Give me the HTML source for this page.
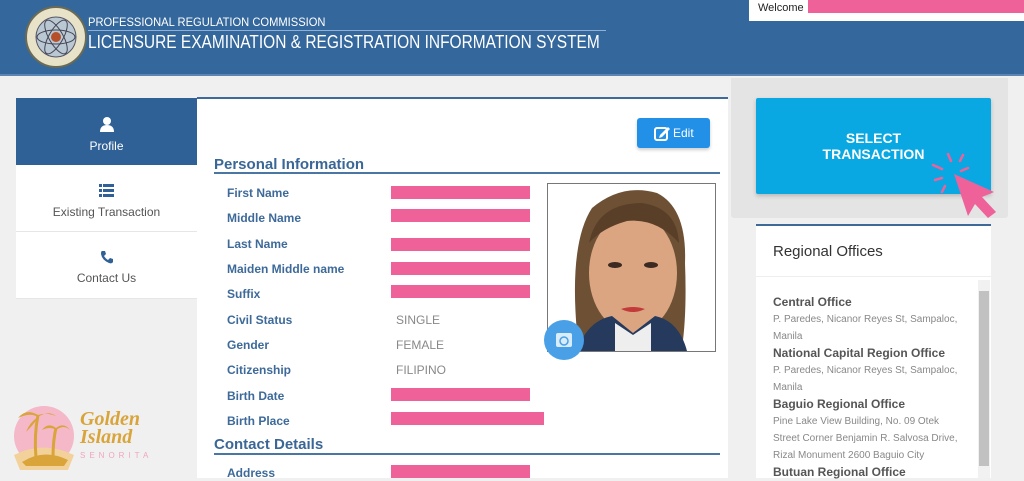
<!DOCTYPE html>
<html><head><meta charset="utf-8"><style>
*{margin:0;padding:0;box-sizing:border-box}
body{width:1024px;height:478px;overflow:hidden;background:#f0f0f0;font-family:"Liberation Sans",sans-serif;position:relative}
.a{position:absolute}
.hdr{left:0;top:0;width:1024px;height:76px;background:#34679c;border-bottom:2px solid #5b86b4}
.lbl{position:absolute;left:227px;font-size:12px;font-weight:bold;color:#3d6a99}
.bar{position:absolute;left:391px;width:139px;height:13px;background:#ee6199}
.val{position:absolute;left:396px;font-size:12px;color:#888}
.nav{position:absolute;left:16px;width:181px;height:67px;background:#fff;text-align:center;font-size:12px;color:#555;border-bottom:1px solid #e6e6e6}
.oh{font-size:12px;font-weight:bold;color:#555;line-height:17px}
.oa{font-size:10px;color:#888;line-height:17px}
</style></head><body>
<div class="a hdr"></div>
<svg class="a" style="left:24px;top:6px" width="64" height="62" viewBox="0 0 64 62"><circle cx="32" cy="31" r="30" fill="#e8e3c8" stroke="#6b6a55" stroke-width="2"/><circle cx="32" cy="31" r="20" fill="#b9c8d2" stroke="#556" stroke-width="1"/><ellipse cx="32" cy="31" rx="19" ry="7" fill="none" stroke="#445" stroke-width="1"/><ellipse cx="32" cy="31" rx="19" ry="7" fill="none" stroke="#445" transform="rotate(60 32 31)"/><ellipse cx="32" cy="31" rx="19" ry="7" fill="none" stroke="#445" transform="rotate(-60 32 31)"/><circle cx="32" cy="31" r="5" fill="#b5502a"/></svg>
<div class="a" style="left:88px;top:15px;font-size:12px;color:#fff;transform:scaleX(0.93);transform-origin:0 0">PROFESSIONAL REGULATION COMMISSION</div>
<div class="a" style="left:88px;top:30px;width:518px;height:1px;background:#8fb0d4"></div>
<div class="a" style="left:88px;top:32px;font-size:18px;color:#fff;white-space:nowrap;transform:scaleX(0.86);transform-origin:0 0">LICENSURE EXAMINATION &amp; REGISTRATION INFORMATION SYSTEM</div>
<div class="a" style="left:749px;top:0;width:275px;height:21px;background:#fff"></div>
<div class="a" style="left:758px;top:2px;font-size:11px;color:#222">Welcome</div>
<div class="a" style="left:808px;top:0;width:216px;height:13px;background:#ee6199"></div>

<div class="nav" style="top:98px;background:#2f6096;color:#fff;border:none"><svg style="margin-top:18px" width="16" height="16" viewBox="0 0 16 16"><circle cx="8" cy="5" r="4" fill="#fff"/><path d="M1 16 Q1 9 8 9 Q15 9 15 16Z" fill="#fff"/></svg><div style="margin-top:4px">Profile</div></div>
<div class="a" style="left:197px;top:122px;width:0;height:0;border-top:10px solid transparent;border-bottom:10px solid transparent;border-left:8px solid #2f6096"></div>
<div class="nav" style="top:165px"><svg style="margin-top:19px" width="15" height="13" viewBox="0 0 15 13"><rect x="0" y="0" width="3" height="3" fill="#2f6096"/><rect x="4" y="0" width="11" height="3" fill="#2f6096"/><rect x="0" y="5" width="3" height="3" fill="#2f6096"/><rect x="4" y="5" width="11" height="3" fill="#2f6096"/><rect x="0" y="10" width="3" height="3" fill="#2f6096"/><rect x="4" y="10" width="11" height="3" fill="#2f6096"/></svg><div style="margin-top:5px">Existing Transaction</div></div>
<div class="nav" style="top:232px"><svg style="margin-top:18px" width="14" height="14" viewBox="0 0 14 14"><path d="M2 1 L5 1 L6 4 L4 6 Q6 9 8 10 L10 8 L13 9 L13 12 Q12 14 9 13 Q2 10 1 4 Q1 1 2 1Z" fill="#2f6096"/></svg><div style="margin-top:4px">Contact Us</div></div>

<div class="a" style="left:197px;top:97px;width:531px;height:381px;background:#fff;border-top:2px solid #3d6a99"></div>
<div class="a" style="left:637px;top:118px;width:73px;height:30px;background:#2390e8;border-radius:3px;box-shadow:0 2px 3px rgba(0,0,0,.2);color:#fff;font-size:12px;line-height:30px;padding-left:36px">Edit</div>
<svg class="a" style="left:654px;top:125px" width="17" height="16" viewBox="0 0 17 16"><rect x="1" y="3" width="12" height="12" rx="2" fill="none" stroke="#fff" stroke-width="2"/><path d="M6 10 L14 2 L16 4 L8 12 L5 13Z" fill="#fff"/></svg>
<div class="a" style="left:214px;top:156px;font-size:15px;font-weight:bold;color:#3a6796">Personal Information</div>
<div class="a" style="left:214px;top:172px;width:506px;height:2px;background:#4a76a4"></div>
<div class="lbl" style="top:186px">First Name</div><div class="bar" style="top:186px"></div>
<div class="lbl" style="top:211px">Middle Name</div><div class="bar" style="top:209px"></div>
<div class="lbl" style="top:237px">Last Name</div><div class="bar" style="top:238px"></div>
<div class="lbl" style="top:262px">Maiden Middle name</div><div class="bar" style="top:262px"></div>
<div class="lbl" style="top:287px">Suffix</div><div class="bar" style="top:285px"></div>
<div class="lbl" style="top:313px">Civil Status</div><div class="val" style="top:313px">SINGLE</div>
<div class="lbl" style="top:338px">Gender</div><div class="val" style="top:338px">FEMALE</div>
<div class="lbl" style="top:363px">Citizenship</div><div class="val" style="top:363px">FILIPINO</div>
<div class="lbl" style="top:389px">Birth Date</div><div class="bar" style="top:388px"></div>
<div class="lbl" style="top:414px">Birth Place</div><div class="bar" style="top:412px;width:153px"></div>
<div class="a" style="left:214px;top:436px;font-size:15px;font-weight:bold;color:#3a6796">Contact Details</div>
<div class="a" style="left:214px;top:453px;width:506px;height:2px;background:#4a76a4"></div>
<div class="lbl" style="top:466px">Address</div><div class="bar" style="top:465px"></div>

<svg class="a" style="left:547px;top:183px" width="169" height="169" viewBox="0 0 169 169"><rect x="0.5" y="0.5" width="168" height="168" fill="#fff" stroke="#777"/><path d="M30 150 Q22 60 45 25 Q75 0 110 10 Q140 25 138 80 Q140 130 135 165 L35 165Z" fill="#6e5135"/><ellipse cx="86" cy="90" rx="44" ry="60" fill="#dca582"/><path d="M42 60 Q50 20 95 20 Q130 25 132 60 Q110 35 80 38 Q55 45 42 60Z" fill="#5a3f28"/><path d="M30 168 Q40 138 65 133 L86 150 L108 133 Q132 138 140 168Z" fill="#253a5c"/><path d="M68 140 L86 152 L104 140 L104 168 L68 168Z" fill="#eee"/><ellipse cx="68" cy="82" rx="7" ry="3" fill="#3a2a22"/><ellipse cx="104" cy="82" rx="7" ry="3" fill="#3a2a22"/><path d="M74 126 Q86 132 98 126 Q86 122 74 126Z" fill="#c23a3a"/></svg>
<div class="a" style="left:544px;top:320px;width:40px;height:40px;border-radius:50%;background:#4aa0e6"></div>
<svg class="a" style="left:554px;top:330px" width="20" height="20" viewBox="0 0 20 20"><rect x="2" y="3" width="16" height="14" rx="2" fill="#d8ecfa"/><circle cx="10" cy="11" r="4" fill="none" stroke="#4aa0e6" stroke-width="1.5"/></svg>

<div class="a" style="left:731px;top:78px;width:277px;height:140px;background:#e4e4e4;border-radius:0 0 3px 3px"></div>
<div class="a" style="left:756px;top:98px;width:235px;height:96px;background:#0aa8e2;border-radius:2px;box-shadow:0 2px 4px rgba(0,0,0,.2);color:#fff;font-weight:bold;font-size:14px;text-align:center;padding-top:32px;line-height:16px">SELECT<br>TRANSACTION</div>
<svg class="a" style="left:930px;top:150px" width="72" height="72" viewBox="0 0 72 72"><g stroke="#ee6199" stroke-width="2.5" stroke-linecap="round"><line x1="18" y1="4" x2="21" y2="11"/><line x1="33" y1="5" x2="30" y2="11"/><line x1="3" y1="15" x2="12" y2="19"/><line x1="38" y1="18" x2="31" y2="21"/><line x1="5" y1="30" x2="12" y2="28"/><line x1="12" y1="42" x2="15" y2="36"/></g><path d="M24 24 L64 42 L52 47 L66 62 L58 68 L45 54 L38 66Z" fill="#ee6199"/></svg>

<div class="a" style="left:756px;top:224px;width:235px;height:254px;background:#fff;border-top:2px solid #3d6a99"></div>
<div class="a" style="left:773px;top:243px;font-size:15px;color:#333">Regional Offices</div>
<div class="a" style="left:756px;top:276px;width:235px;height:1px;background:#eee"></div>
<div class="a" style="left:978px;top:280px;width:12px;height:198px;background:#f1f1f1"></div>
<div class="a" style="left:979px;top:291px;width:10px;height:175px;background:#c1c1c1"></div>
<div class="a" style="left:773px;top:294px;width:200px">
<div class="oh">Central Office</div><div class="oa">P. Paredes, Nicanor Reyes St, Sampaloc,<br>Manila</div>
<div class="oh">National Capital Region Office</div><div class="oa">P. Paredes, Nicanor Reyes St, Sampaloc,<br>Manila</div>
<div class="oh">Baguio Regional Office</div><div class="oa">Pine Lake View Building, No. 09 Otek<br>Street Corner Benjamin R. Salvosa Drive,<br>Rizal Monument 2600 Baguio City</div>
<div class="oh">Butuan Regional Office</div></div>

<svg class="a" style="left:8px;top:400px" width="70" height="72" viewBox="0 0 70 72"><circle cx="36" cy="36" r="30" fill="#f4b8c8"/><path d="M6 55 Q35 40 66 55 L60 70 L12 70Z" fill="#f3d19a"/><path d="M14 62 Q36 48 60 60 L56 66 L18 66Z" fill="#d9a43a"/><g stroke="#d9a43a" stroke-width="3" fill="none"><path d="M28 58 Q26 35 30 15"/><path d="M45 58 Q45 40 48 28"/></g><g fill="#d9a43a"><path d="M30 15 Q18 8 10 18 Q22 12 30 17 Q22 22 18 32 Q28 22 30 17 Q40 10 48 16 Q38 12 30 15Z"/><path d="M48 28 Q40 22 34 30 Q42 26 48 30 Q56 24 62 30 Q56 22 48 28Z"/></g></svg>
<div class="a" style="left:80px;top:410px;font-family:'Liberation Serif',serif;font-style:italic;font-weight:bold;font-size:20px;line-height:18px;color:#d9a43a">Golden<br>Island</div>
<div class="a" style="left:80px;top:451px;font-size:8px;letter-spacing:4px;color:#f0a6bd">SENORITA</div>
</body></html>
